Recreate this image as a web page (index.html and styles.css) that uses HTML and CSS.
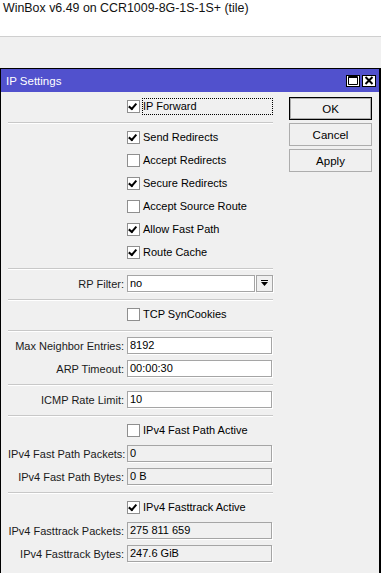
FILE: index.html
```html
<!DOCTYPE html>
<html lang="en">
<head>
    <meta charset="UTF-8">
    <meta name="viewport" content="width=device-width, initial-scale=1.0">
    <title>IP Settings</title>
    <link rel="stylesheet" href="styles.css">
</head>
<body>
    <div class="top-bar">WinBox v6.49 on CCR1009-8G-1S-1S+ (tile)</div>
    <div class="desk">
        <div class="window">
            <div class="title-bar">
                <span class="title">IP Settings</span>
                <div class="title-buttons">
                    <span class="tb-btn">
                        <svg width="10" height="9" viewBox="0 0 10 9"><path d="M0.5 0.5h9v8h-9z M0.5 1.5h9" fill="none" stroke="#000" stroke-width="1"/></svg>
                    </span>
                    <span class="tb-btn">
                        <svg width="10" height="9" viewBox="0 0 10 9"><path d="M1.5 1L8.5 8M8.5 1L1.5 8" stroke="#000" stroke-width="2"/></svg>
                    </span>
                </div>
            </div>
            <div class="window-body">
                <div class="form">
                    <div class="section first">
                        <div class="row">
                            <span class="label"></span>
                            <label class="check"><span class="box checked"></span><span class="text focus">IP Forward</span></label>
                        </div>
                    </div>
                    <div class="sep"></div>
                    <div class="section">
                        <div class="row"><span class="label"></span><label class="check"><span class="box checked"></span><span class="text">Send Redirects</span></label></div>
                        <div class="row"><span class="label"></span><label class="check"><span class="box"></span><span class="text">Accept Redirects</span></label></div>
                        <div class="row"><span class="label"></span><label class="check"><span class="box checked"></span><span class="text">Secure Redirects</span></label></div>
                        <div class="row"><span class="label"></span><label class="check"><span class="box"></span><span class="text">Accept Source Route</span></label></div>
                        <div class="row"><span class="label"></span><label class="check"><span class="box checked"></span><span class="text">Allow Fast Path</span></label></div>
                        <div class="row"><span class="label"></span><label class="check"><span class="box checked"></span><span class="text">Route Cache</span></label></div>
                    </div>
                    <div class="sep"></div>
                    <div class="section">
                        <div class="row">
                            <span class="label">RP Filter:</span>
                            <div class="combo">
                                <span class="field">no</span>
                                <span class="drop">
                                    <svg width="7" height="7" viewBox="0 0 7 7"><rect x="0" y="0" width="7" height="1" fill="#000"/><path d="M0 2H7L3.5 6Z" fill="#000"/></svg>
                                </span>
                            </div>
                        </div>
                    </div>
                    <div class="sep"></div>
                    <div class="section">
                        <div class="row"><span class="label"></span><label class="check"><span class="box"></span><span class="text">TCP SynCookies</span></label></div>
                    </div>
                    <div class="sep"></div>
                    <div class="section">
                        <div class="row"><span class="label">Max Neighbor Entries:</span><span class="field">8192</span></div>
                        <div class="row"><span class="label">ARP Timeout:</span><span class="field">00:00:30</span></div>
                    </div>
                    <div class="sep"></div>
                    <div class="section">
                        <div class="row"><span class="label">ICMP Rate Limit:</span><span class="field">10</span></div>
                    </div>
                    <div class="sep"></div>
                    <div class="section">
                        <div class="row"><span class="label"></span><label class="check"><span class="box"></span><span class="text">IPv4 Fast Path Active</span></label></div>
                        <div class="row"><span class="label">IPv4 Fast Path Packets:</span><span class="field readonly">0</span></div>
                        <div class="row"><span class="label">IPv4 Fast Path Bytes:</span><span class="field readonly">0 B</span></div>
                    </div>
                    <div class="sep"></div>
                    <div class="section">
                        <div class="row"><span class="label"></span><label class="check"><span class="box checked"></span><span class="text">IPv4 Fasttrack Active</span></label></div>
                        <div class="row"><span class="label">IPv4 Fasttrack Packets:</span><span class="field readonly">275 811 659</span></div>
                        <div class="row"><span class="label">IPv4 Fasttrack Bytes:</span><span class="field readonly">247.6 GiB</span></div>
                    </div>
                </div>
                <div class="buttons">
                    <button class="btn default">OK</button>
                    <button class="btn">Cancel</button>
                    <button class="btn">Apply</button>
                </div>
            </div>
        </div>
    </div>
</body>
</html>
```

FILE: styles.css
```css
/* General */
body {
    margin: 0;
    padding: 0;
    font-family: 'Liberation Sans', Arial, sans-serif;
    font-size: 11px;
    color: #000;
    background: #f0f0f0;
    overflow: hidden;
}

.top-bar {
    height: 37px;
    background: #fff;
    border-bottom: 1px solid #cfcfcf;
    padding: 1px 0 0 3px;
    box-sizing: border-box;
    font-size: 12.4px;
    line-height: 15px;
    color: #111;
}

.desk {
    padding-top: 31px;
}

/* Window */
.window {
    width: 381px;
    box-sizing: border-box;
    border: 1px solid #000;
    border-right-width: 2px;
    background: #f0f0f0;
    height: 600px;
}

.title-bar {
    height: 23px;
    background: #5151cd;
    display: flex;
    align-items: center;
    justify-content: space-between;
    padding: 0 3px 0 5px;
}

.title {
    color: #fff;
    font-size: 11.5px;
}

.title-buttons {
    display: flex;
    gap: 2px;
}

.tb-btn {
    width: 14px;
    height: 12px;
    box-sizing: border-box;
    border: 1px solid #000;
    background: #fff;
    display: flex;
    align-items: center;
    justify-content: center;
}

.window-body {
    display: flex;
    gap: 16px;
    padding-left: 7px;
}

/* Form */
.form {
    width: 265px;
}

.section {
    display: flex;
    flex-direction: column;
    gap: 6px;
    padding: 5px 0 7px;
}

.section.first {
    padding-top: 6px;
}

.sep {
    height: 1px;
    background: #c8c8c8;
    border-bottom: 1px solid #fff;
}

.row {
    display: grid;
    grid-template-columns: 116px 146px;
    column-gap: 3px;
    height: 17px;
    align-items: center;
}

.label {
    text-align: right;
    white-space: nowrap;
    color: #1a1a1a;
}

.check {
    display: flex;
    align-items: center;
    height: 17px;
}

.box {
    width: 13px;
    height: 13px;
    box-sizing: border-box;
    border: 1px solid #8f8f8f;
    background: #fff;
    position: relative;
    flex-shrink: 0;
}

.box.checked::after {
    content: '';
    position: absolute;
    left: 2px;
    top: 1px;
    width: 3px;
    height: 6px;
    border-right: 2px solid #000;
    border-bottom: 2px solid #000;
    transform: rotate(40deg);
    transform-origin: 3px 4px;
}

.text {
    margin-left: 2px;
    border: 1px dotted transparent;
    height: 17px;
    line-height: 15px;
    box-sizing: border-box;
    flex: 1;
    white-space: nowrap;
}

.text.focus {
    border-color: #000;
}

.field {
    display: block;
    height: 17px;
    box-sizing: border-box;
    border: 1px solid #a5a5a5;
    box-shadow: 1px 1px 0 #fff;
    background: #fff;
    padding-left: 2px;
    line-height: 15px;
    width: 145px;
    white-space: nowrap;
}

.field.readonly {
    background: #f0f0f0;
}

.combo {
    display: flex;
    gap: 1px;
}

.combo .field {
    width: 128px;
}

.drop {
    width: 17px;
    height: 17px;
    box-sizing: border-box;
    border: 1px solid #a5a5a5;
    box-shadow: 1px 1px 0 #fff;
    background: #f0f0f0;
    display: flex;
    align-items: center;
    justify-content: center;
}

/* Buttons */
.buttons {
    display: flex;
    flex-direction: column;
    gap: 3px;
    padding-top: 5px;
}

.btn {
    width: 83px;
    height: 23px;
    font-family: 'Liberation Sans', Arial, sans-serif;
    font-size: 11.5px;
    background: #f0f0f0;
    border: 1px solid #adadad;
    color: #000;
    padding: 0;
}

.btn.default {
    border: 1px solid #000;
    box-shadow: inset 0 0 0 1px #adadad;
}
```
